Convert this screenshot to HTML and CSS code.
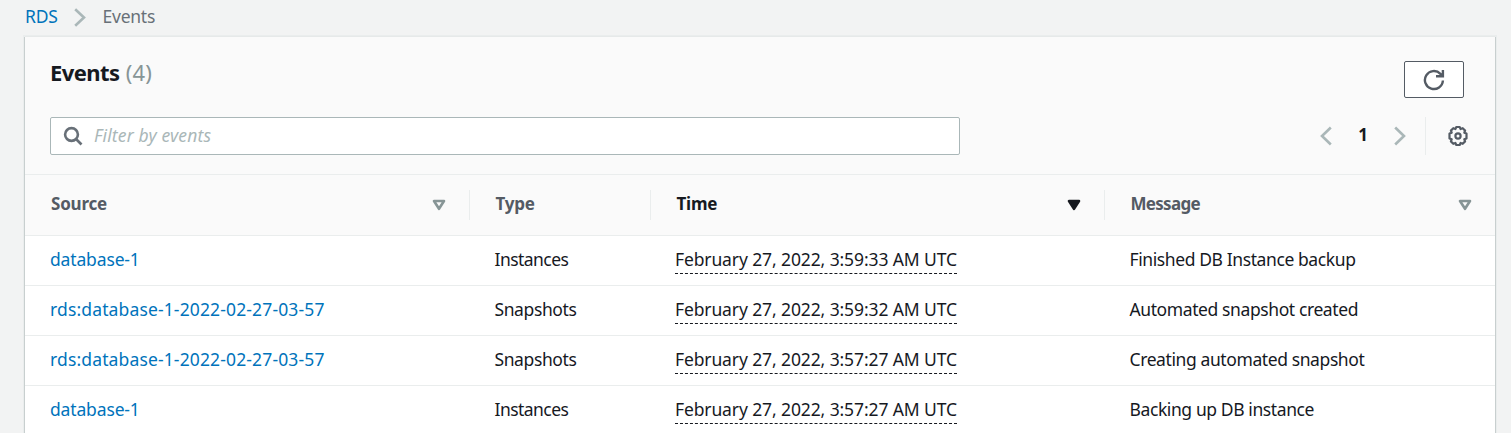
FILE: index.html
```html
<!DOCTYPE html>
<html lang="en">
<head>
<meta charset="utf-8">
<title>RDS Events</title>
<link rel="stylesheet" href="styles.css">
</head>
<body>
<nav class="breadcrumb">
  <a class="link" href="#">RDS</a>
  <svg class="crumb-sep" width="12" height="19" viewBox="0 0 12 19"><path d="M1.200 1.200 10 9.500 1.200 17.800"/></svg>
  <span class="crumb-current">Events</span>
</nav>
<main class="panel">
  <header class="panel-head">
    <div class="title-row">
      <h1 class="title">Events <span class="count">(4)</span></h1>
      <button class="refresh" aria-label="Refresh">
        <svg width="22" height="22" viewBox="0 0 22 22"><path d="M19.900 11.500A9 9 0 1 1 17.400 4.800L19 6.400M19.900 1v6.200h-6.900"/></svg>
      </button>
    </div>
    <div class="tools-row">
      <label class="search">
        <svg width="20" height="20" viewBox="0 0 20 20"><circle cx="8.500" cy="8.500" r="6.400"/><path d="M13 13 18.500 18.500"/></svg>
        <span class="placeholder">Filter by events</span>
      </label>
      <div class="pager">
        <svg class="arrow" width="12" height="20" viewBox="0 0 12 20"><path d="M10.800 1.500 2 10l8.800 8.500"/></svg>
        <span class="page">1</span>
        <svg class="arrow" width="12" height="20" viewBox="0 0 12 20"><path d="M1.200 1.500 10 10l-8.800 8.500"/></svg>
        <span class="rule"></span>
        <svg class="gear" width="22" height="22" viewBox="0 0 22 22"><path d="M9.300 2h3.400l.9 2 2.100-.8 2.400 2.400-.8 2.100 2.200.9v4.800l-2.200.9.8 2.100-2.400 2.400-2.100-.8-.9 2H9.300l-.9-2-2.100.8-2.400-2.400.8-2.100-2.200-.9V8.600l2.200-.9-.8-2.100 2.400-2.400 2.100.8z"/><circle cx="11" cy="11" r="2.600"/></svg>
      </div>
    </div>
  </header>
  <div class="grid head">
    <div class="th source">Source<svg class="sort" width="14" height="12" viewBox="0 0 14 12"><path d="M2 2h10L7 9.800z"/></svg></div>
    <div class="th type">Type</div>
    <div class="th time active">Time<svg class="sort" width="14" height="12" viewBox="0 0 14 12"><path d="M2 2h10L7 9.800z"/></svg></div>
    <div class="th message">Message<svg class="sort" width="14" height="12" viewBox="0 0 14 12"><path d="M2 2h10L7 9.800z"/></svg></div>
  </div>
  <div class="grid row"><a class="link" href="#">database-1</a><span class="kind">Instances</span><span><span class="stamp">February 27, 2022, 3:59:33 AM UTC</span></span><span>Finished DB Instance backup</span></div>
  <div class="grid row"><a class="link id" href="#">rds:database-1-2022-02-27-03-57</a><span>Snapshots</span><span><span class="stamp">February 27, 2022, 3:59:32 AM UTC</span></span><span>Automated snapshot created</span></div>
  <div class="grid row"><a class="link id" href="#">rds:database-1-2022-02-27-03-57</a><span>Snapshots</span><span><span class="stamp">February 27, 2022, 3:57:27 AM UTC</span></span><span>Creating automated snapshot</span></div>
  <div class="grid row"><a class="link" href="#">database-1</a><span class="kind">Instances</span><span><span class="stamp">February 27, 2022, 3:57:27 AM UTC</span></span><span>Backing up DB instance</span></div>
</main>
</body>
</html>
```
FILE: styles.css
```css
* { box-sizing: border-box; }
body {
  margin: 0;
  height: 433px;
  overflow: hidden;
  background: #f2f3f3;
  color: #16191f;
  font: 17.5px/24px "Noto Sans", sans-serif;
  letter-spacing: -0.4px;
}
svg { display: block; flex: none; fill: none; }
.link { color: #0073bb; text-decoration: none; }
.breadcrumb {
  display: flex;
  align-items: center;
  height: 37px;
  padding: 0 25px 4px;
}
.breadcrumb .link, .crumb-current { padding-bottom: 2px; letter-spacing: -0.25px; }
.crumb-sep { margin: 1px 17px 0 16px; stroke: #aab7b8; stroke-width: 2.6; }
.crumb-current { color: #687078; }
.panel {
  width: 1470px;
  height: 396px;
  margin-left: 25px;
  overflow: hidden;
  background: #fff;
  box-shadow: -1px 0 0 #c8cfcf, 1px 0 0 #c8cfcf, 0 -1px 0 #e6e9e9, 0 0 0 2px #eaeded;
}
.panel-head {
  height: 138px;
  padding: 0 31px 0 25px;
  background: #fafafa;
  border-bottom: 1px solid #eaeded;
}
.title-row { display: flex; justify-content: space-between; height: 80px; }
.title { margin: 21px 0 0; font-size: 22px; line-height: 28px; font-weight: 700; letter-spacing: -0.55px; }
.count { margin-left: 1px; color: #879596; font-weight: 400; letter-spacing: 0.2px; }
.refresh {
  display: flex;
  align-items: center;
  justify-content: center;
  width: 60px;
  height: 37px;
  margin-top: 24px;
  padding: 0;
  background: #fff;
  border: 1px solid #545b64;
  border-radius: 2px;
}
.refresh svg { stroke: #545b64; stroke-width: 2.4; }
.tools-row { display: flex; justify-content: space-between; }
.search {
  display: flex;
  align-items: center;
  width: 910px;
  height: 38px;
  padding-left: 12px;
  background: #fff;
  border: 1px solid #aab7b8;
  border-radius: 2px;
}
.search svg { stroke: #687078; stroke-width: 2.6; }
.placeholder { margin-left: 11px; padding-bottom: 2px; color: #aab7b8; font-style: italic; letter-spacing: 0.15px; }
.pager { display: flex; align-items: center; height: 38px; margin-right: -5px; }
.arrow { stroke: #aab7b8; stroke-width: 2.6; }
.page { width: 62px; padding-bottom: 2px; text-align: center; font-size: 17px; font-weight: 700; }
.rule { width: 1px; height: 38px; margin: 0 21px 0 19px; background: #eaeded; }
.gear { stroke: #545b64; stroke-width: 2.2; stroke-linejoin: round; }
.grid { display: grid; grid-template-columns: 445px 181px 454px 390px; }
.head {
  height: 61px;
  align-items: center;
  background: #fafafa;
  border-bottom: 1px solid #eaeded;
  color: #545b64;
  font-size: 17px;
  font-weight: 700;
  letter-spacing: -0.2px;
}
.th {
  display: flex;
  align-items: center;
  justify-content: space-between;
  height: 30px;
  padding: 0 23px 2px 26px;
  border-right: 1px solid #eaeded;
}
.type, .time, .message { padding-left: 25.5px; }
.message { border-right: 0; letter-spacing: -0.7px; }
.sort { margin-top: 2px; stroke: #879596; stroke-width: 2.6; stroke-linejoin: round; }
.active { color: #16191f; }
.active .sort { stroke: #16191f; fill: #16191f; }
.row { height: 50px; align-items: center; border-bottom: 1px solid #eaeded; }
.row > * { padding: 0 0 3px 24.5px; }
.row > .link { padding-left: 25px; letter-spacing: -0.15px; }
.row > .id { letter-spacing: 0.14px; }
.row > .kind { letter-spacing: -0.54px; }
.stamp { display: inline-block; height: 27px; margin: 3px 0 0 -0.6px; border-bottom: 1px dashed #16191f; letter-spacing: -0.11px; }
```
